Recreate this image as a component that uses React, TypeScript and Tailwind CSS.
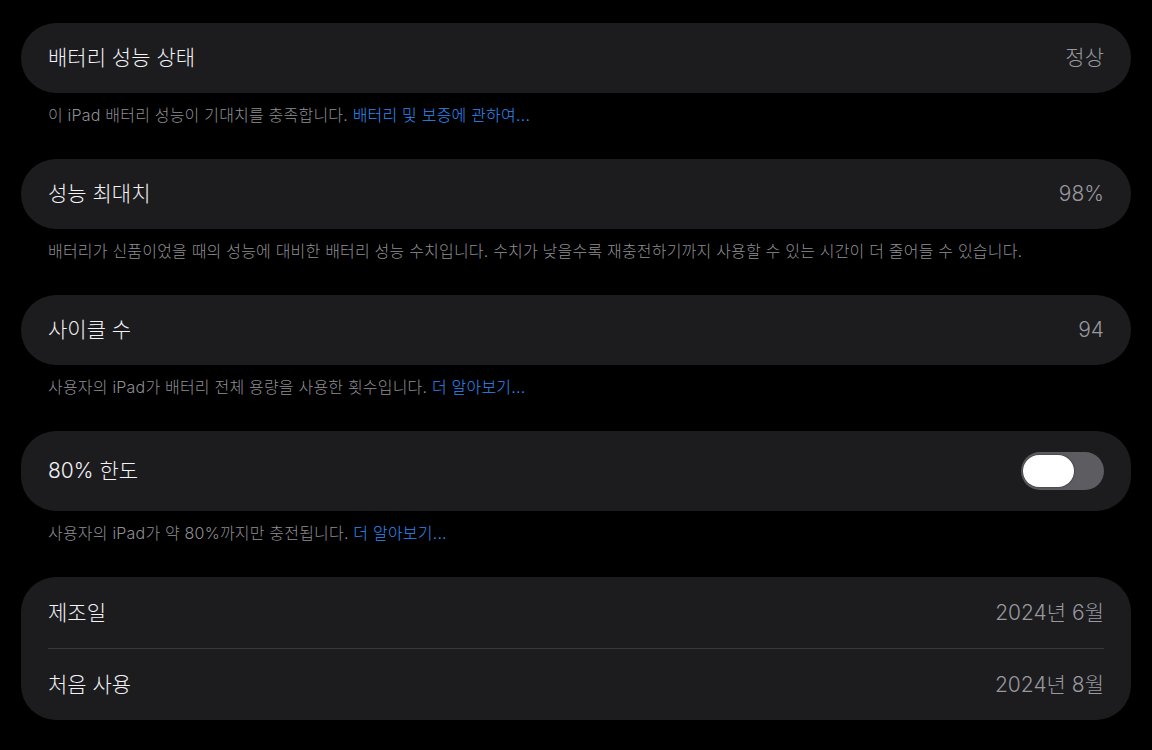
import React from 'react';

const font = { fontFamily: '"Inter", "Noto Sans CJK KR", sans-serif' };

const Row: React.FC<{ label: string; value?: string; children?: React.ReactNode; height?: string }> = ({
  label,
  value,
  children,
  height = 'h-[70px]',
}) => (
  <div className={`flex items-center justify-between px-[27px] ${height}`}>
    <span className="text-[21px] font-light text-[#f2f2f7]">{label}</span>
    {value && <span className="text-[21px] font-light text-[#98989f]">{value}</span>}
    {children}
  </div>
);

const Footer: React.FC<{ text: string; link?: string }> = ({ text, link }) => (
  <p className="px-[27px] pt-[12px] pb-[33px] text-[16px] leading-[21px] tracking-[0.2px] font-light text-[#8e8e93]">
    {text}
    {link && <span className="text-[#2f8bf7]"> {link}</span>}
  </p>
);

const Toggle: React.FC = () => (
  <div className="relative w-[83px] h-[38px] rounded-full bg-[#5c5c61]">
    <div className="absolute left-[2px] top-[3px] w-[51px] h-[32px] rounded-full bg-white shadow-[0_0_2px_rgba(0,0,0,0.6)]" />
  </div>
);

export default function App() {
  return (
    <div className="w-[1152px] h-[750px] bg-black overflow-hidden pt-[23px] px-[21px]" style={font}>
      <div className="rounded-[35px] bg-[#1c1c1e]">
        <Row label="배터리 성능 상태" value="정상" />
      </div>
      <Footer text="이 iPad 배터리 성능이 기대치를 충족합니다." link="배터리 및 보증에 관하여..." />

      <div className="rounded-[35px] bg-[#1c1c1e]">
        <Row label="성능 최대치" value="98%" />
      </div>
      <Footer text="배터리가 신품이었을 때의 성능에 대비한 배터리 성능 수치입니다. 수치가 낮을수록 재충전하기까지 사용할 수 있는 시간이 더 줄어들 수 있습니다." />

      <div className="rounded-[35px] bg-[#1c1c1e]">
        <Row label="사이클 수" value="94" />
      </div>
      <Footer text="사용자의 iPad가 배터리 전체 용량을 사용한 횟수입니다." link="더 알아보기..." />

      <div className="rounded-[35px] bg-[#1c1c1e]">
        <Row label="80% 한도" height="h-[80px]">
          <Toggle />
        </Row>
      </div>
      <Footer text="사용자의 iPad가 약 80%까지만 충전됩니다." link="더 알아보기..." />

      <div className="rounded-[35px] bg-[#1c1c1e]">
        <Row label="제조일" value="2024년 6월" height="h-[71px]" />
        <div className="mx-[27px] h-px bg-[#38383a]" />
        <Row label="처음 사용" value="2024년 8월" height="h-[71px]" />
      </div>
    </div>
  );
}
